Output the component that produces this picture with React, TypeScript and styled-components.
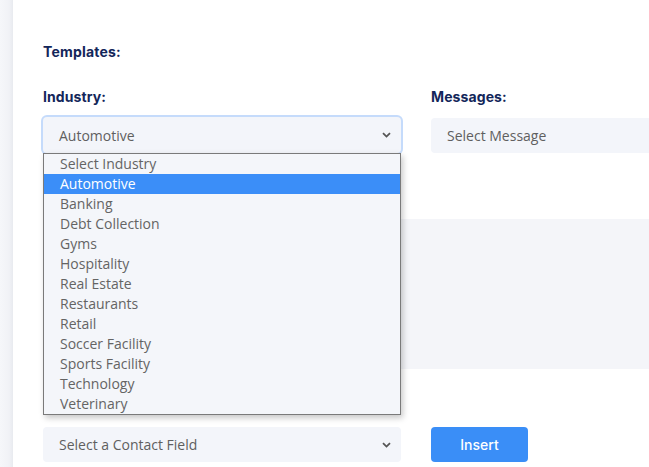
import { useState } from "react";
import styled, { createGlobalStyle } from "styled-components";

const GlobalStyle = createGlobalStyle`
  html, body {
    margin: 0;
    padding: 0;
    background: #f3f4f8;
    overflow: hidden;
  }
  * {
    box-sizing: border-box;
  }
`;

const INDUSTRIES = [
  "Select Industry",
  "Automotive",
  "Banking",
  "Debt Collection",
  "Gyms",
  "Hospitality",
  "Real Estate",
  "Restaurants",
  "Retail",
  "Soccer Facility",
  "Sports Facility",
  "Technology",
  "Veterinary",
];

const Page = styled.div`
  display: flex;
  width: 649px;
  height: 467px;
`;

const Gutter = styled.div`
  width: 13px;
  flex-shrink: 0;
  background: linear-gradient(to right, #f6f7fa 0%, #f1f2f6 70%, #e8eaef 100%);
`;

const Panel = styled.main`
  flex: 1;
  background: #ffffff;
  padding: 43px 0 0 30px;
  overflow: hidden;
`;

const SectionTitle = styled.h2`
  margin: 0;
  font-family: "Inter", "Liberation Sans", sans-serif;
  font-weight: 700;
  font-size: 14px;
  letter-spacing: 0.2px;
  line-height: 18px;
  color: #13265a;
`;

const Form = styled.div`
  display: grid;
  grid-template-columns: 358px 358px;
  column-gap: 30px;
  margin-top: 26px;
`;

const Field = styled.div`
  display: flex;
  flex-direction: column;
`;

const Label = styled.label`
  font-family: "Inter", "Liberation Sans", sans-serif;
  font-weight: 700;
  font-size: 14px;
  letter-spacing: 0.1px;
  line-height: 20px;
  color: #13265a;
  margin-bottom: 10px;
`;

const SelectWrap = styled.div`
  position: relative;
`;

const SelectBox = styled.div<{ $focused?: boolean; $height?: number }>`
  display: flex;
  align-items: center;
  justify-content: space-between;
  height: ${(p) => p.$height ?? 36}px;
  padding: 0 10px 0 16px;
  background: #f3f5fa;
  border-radius: 4px;
  font-family: "Open Sans", "Liberation Sans", sans-serif;
  font-size: 14px;
  color: #5f5f5f;
  box-shadow: ${(p) => (p.$focused ? "0 0 0 2px #c5dbfb" : "none")};
  cursor: pointer;
`;

const Chevron = () => (
  <svg width="9" height="6" viewBox="0 0 9 6">
    <polyline
      points="1,1.2 4.5,4.6 8,1.2"
      fill="none"
      stroke="#555"
      strokeWidth="1.8"
    />
  </svg>
);

const OptionList = styled.ul`
  position: absolute;
  top: 100%;
  left: 0;
  width: 358px;
  margin: 0;
  padding: 0;
  list-style: none;
  background: #f4f6fa;
  border: 1px solid #7a7a7a;
  box-shadow: 2px 3px 6px rgba(0, 0, 0, 0.22);
  z-index: 10;
`;

const Option = styled.li<{ $active?: boolean }>`
  height: 20px;
  line-height: 20px;
  padding-left: 16px;
  font-family: "Open Sans", "Liberation Sans", sans-serif;
  font-size: 14px;
  color: ${(p) => (p.$active ? "#ffffff" : "#646464")};
  background: ${(p) => (p.$active ? "#3b8ef8" : "transparent")};
`;

const MessageArea = styled.div`
  grid-column: 1 / span 2;
  height: 150px;
  margin-top: 66px;
  background: #f4f5f9;
`;

const BottomRow = styled.div`
  grid-column: 1 / span 2;
  display: grid;
  grid-template-columns: 358px auto;
  column-gap: 30px;
  margin-top: 58px;
`;

const InsertButton = styled.button`
  width: 97px;
  height: 35px;
  border: none;
  border-radius: 4px;
  background: #3a8ef7;
  color: #ffffff;
  font-family: "Inter", "Liberation Sans", sans-serif;
  font-weight: 500;
  font-size: 14px;
  cursor: pointer;
`;

export default function App() {
  const [industry] = useState("Automotive");

  return (
    <>
      <GlobalStyle />
      <Page>
        <Gutter />
        <Panel>
          <SectionTitle>Templates:</SectionTitle>
          <Form>
            <Field>
              <Label>Industry:</Label>
              <SelectWrap>
                <SelectBox $focused>
                  <span>{industry}</span>
                  <Chevron />
                </SelectBox>
                <OptionList>
                  {INDUSTRIES.map((name) => (
                    <Option key={name} $active={name === industry}>
                      {name}
                    </Option>
                  ))}
                </OptionList>
              </SelectWrap>
            </Field>
            <Field>
              <Label>Messages:</Label>
              <SelectBox $height={35} style={{ marginTop: 1 }}>
                <span>Select Message</span>
              </SelectBox>
            </Field>
            <MessageArea />
            <BottomRow>
              <SelectBox $height={35}>
                <span>Select a Contact Field</span>
                <Chevron />
              </SelectBox>
              <InsertButton>Insert</InsertButton>
            </BottomRow>
          </Form>
        </Panel>
      </Page>
    </>
  );
}
